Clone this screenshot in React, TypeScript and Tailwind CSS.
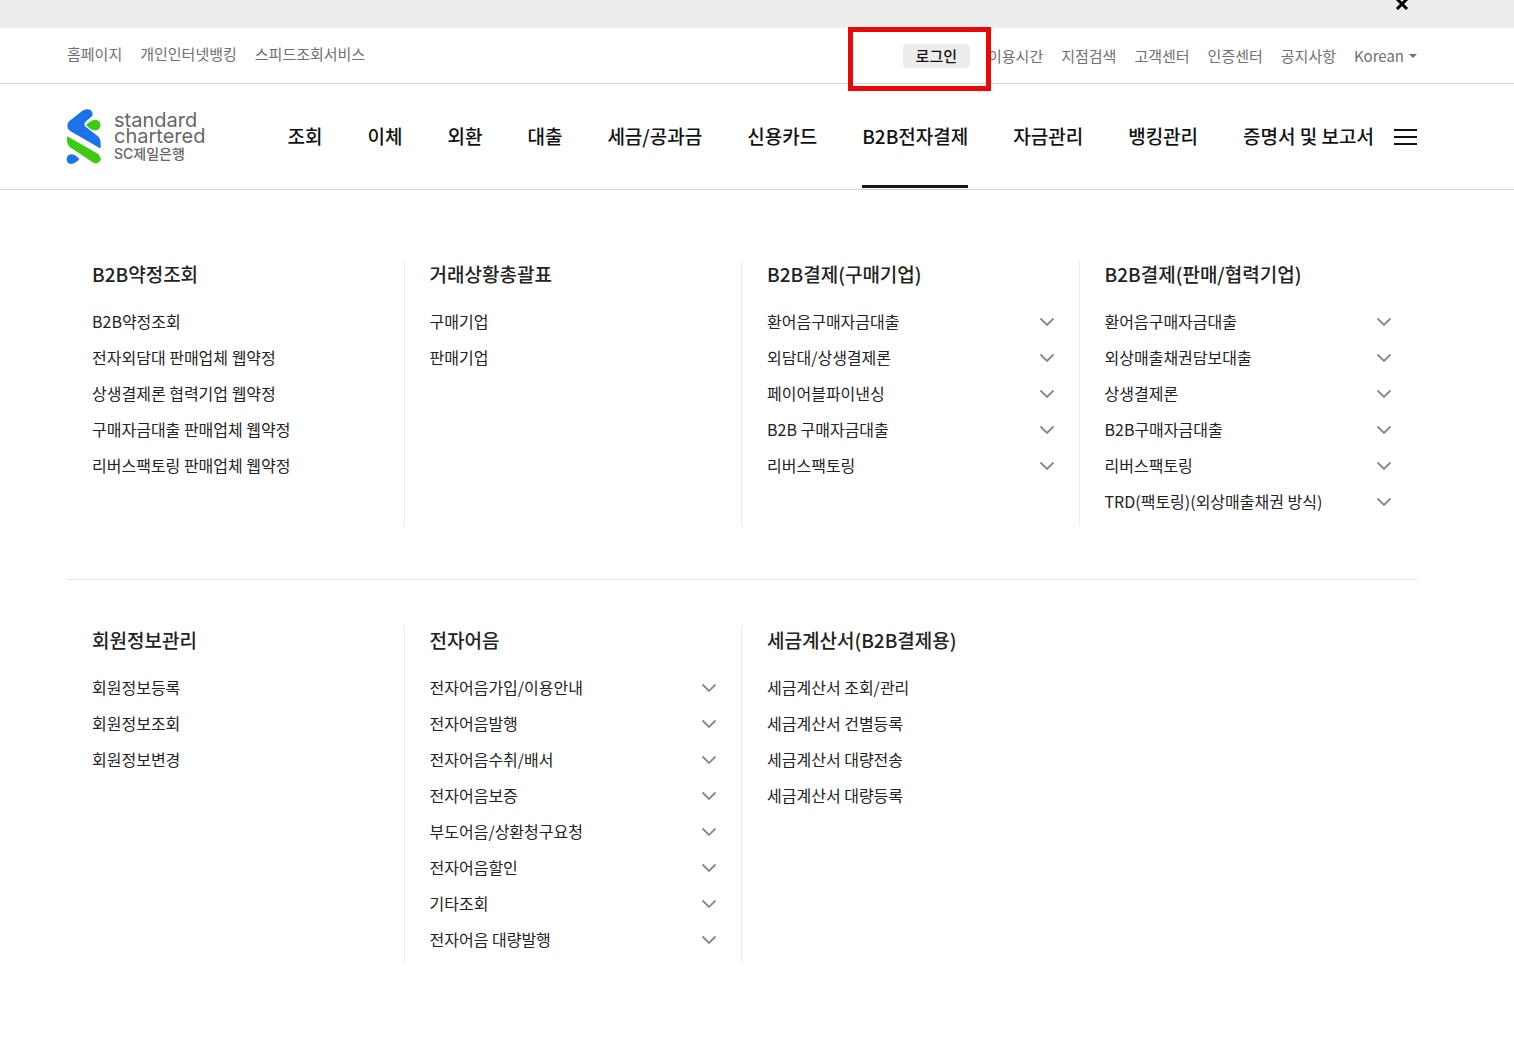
type MenuItem = { label: string; expandable?: boolean };
type MenuGroup = { title: string; items: MenuItem[] };

const leftLinks = ["홈페이지", "개인인터넷뱅킹", "스피드조회서비스"];
const rightLinks = ["이용시간", "지점검색", "고객센터", "인증센터", "공지사항"];

const navItems = [
  "조회",
  "이체",
  "외환",
  "대출",
  "세금/공과금",
  "신용카드",
  "B2B전자결제",
  "자금관리",
  "뱅킹관리",
  "증명서 및 보고서",
];
const activeNav = "B2B전자결제";

function plain(...labels: string[]): MenuItem[] {
  return labels.map((label) => ({ label }));
}

function expandable(...labels: string[]): MenuItem[] {
  return labels.map((label) => ({ label, expandable: true }));
}

const menuRows: MenuGroup[][] = [
  [
    {
      title: "B2B약정조회",
      items: plain(
        "B2B약정조회",
        "전자외담대 판매업체 웹약정",
        "상생결제론 협력기업 웹약정",
        "구매자금대출 판매업체 웹약정",
        "리버스팩토링 판매업체 웹약정",
      ),
    },
    { title: "거래상황총괄표", items: plain("구매기업", "판매기업") },
    {
      title: "B2B결제(구매기업)",
      items: expandable(
        "환어음구매자금대출",
        "외담대/상생결제론",
        "페이어블파이낸싱",
        "B2B 구매자금대출",
        "리버스팩토링",
      ),
    },
    {
      title: "B2B결제(판매/협력기업)",
      items: expandable(
        "환어음구매자금대출",
        "외상매출채권담보대출",
        "상생결제론",
        "B2B구매자금대출",
        "리버스팩토링",
        "TRD(팩토링)(외상매출채권 방식)",
      ),
    },
  ],
  [
    { title: "회원정보관리", items: plain("회원정보등록", "회원정보조회", "회원정보변경") },
    {
      title: "전자어음",
      items: expandable(
        "전자어음가입/이용안내",
        "전자어음발행",
        "전자어음수취/배서",
        "전자어음보증",
        "부도어음/상환청구요청",
        "전자어음할인",
        "기타조회",
        "전자어음 대량발행",
      ),
    },
    {
      title: "세금계산서(B2B결제용)",
      items: plain("세금계산서 조회/관리", "세금계산서 건별등록", "세금계산서 대량전송", "세금계산서 대량등록"),
    },
  ],
];

function Logo() {
  return (
    <a href="#" className="flex items-center gap-3 text-[#666]">
      <svg viewBox="0 0 108 170" className="h-14 w-9" aria-hidden="true">
        <path
          d="M48 6 Q61 -3 75 4 Q86 17 74 26 L60 37 Q50 46 60 55 L98 84 Q107 94 104 120 L12 67 Q-3 55 8 38 Z"
          fill="#1a73ea"
        />
        <path d="M61 49 Q73 34 88 33 Q104 35 104 49 Q102 64 88 65 Q74 64 61 49 Z" fill="#3ccb12" />
        <path
          d="M3 83 L96 136 Q109 147 103 158 Q94 170 80 162 L12 116 Q-1 105 3 83 Z"
          fill="#3ccb12"
        />
        <path d="M40 152 Q28 166 15 167 Q1 165 1 152 Q2 138 16 137 Q30 139 40 152 Z" fill="#1a73ea" />
      </svg>
      <span className="flex flex-col font-['Inter','Noto_Sans_CJK_KR',sans-serif]">
        <span className="text-xl leading-4">standard</span>
        <span className="text-xl leading-4">chartered</span>
        <span className="mt-0.5 text-sm leading-4 font-medium">SC제일은행</span>
      </span>
    </a>
  );
}

function UtilityBar() {
  return (
    <div className="border-b border-[#d8d8d8]">
      <div className="flex h-[55px] items-center justify-between pr-[97px] pl-[67px] text-[15px] text-[#6f6f6f]">
        <ul className="flex gap-[18px] pb-0.5">
          {leftLinks.map((label) => (
            <li key={label}>
              <a href="#">{label}</a>
            </li>
          ))}
        </ul>
        <ul className="flex items-center gap-[18px] pt-px">
          <li className="relative">
            <button type="button" className="block h-6 rounded bg-[#ededed] px-[13px] leading-6 font-medium text-[#111]">
              로그인
            </button>
            {/* highlight frame around the login button */}
            <span className="pointer-events-none absolute -top-[17px] -right-[21px] -bottom-[23px] -left-[55px] border-5 border-[#e80808]" />
          </li>
          {rightLinks.map((label) => (
            <li key={label}>
              <a href="#">{label}</a>
            </li>
          ))}
          <li>
            <button type="button" className="flex items-center gap-[5px]">
              Korean
              <svg viewBox="0 0 8 4" className="h-1 w-2" fill="currentColor" aria-hidden="true">
                <path d="M0 0h8L4 4z" />
              </svg>
            </button>
          </li>
        </ul>
      </div>
    </div>
  );
}

function Header() {
  return (
    <header className="border-b border-[#d0d0d0]">
      <div className="flex h-[105px] items-stretch justify-between pr-[97px] pl-[66px]">
        <Logo />
        <div className="flex items-stretch gap-5">
          <nav className="flex items-stretch gap-[45px] text-[19px] font-medium text-[#111]">
            {navItems.map((label) => (
              <a
                key={label}
                href="#"
                className={`mb-px flex items-center border-b-3 pt-1 whitespace-nowrap ${
                  label === activeNav ? "border-[#1a1a1a]" : "border-transparent"
                }`}
              >
                {label}
              </a>
            ))}
          </nav>
          <button type="button" aria-label="전체메뉴" className="flex flex-col justify-center gap-[5px]">
            <span className="h-0.5 w-[23px] bg-[#111]" />
            <span className="h-0.5 w-[23px] bg-[#111]" />
            <span className="h-0.5 w-[23px] bg-[#111]" />
          </button>
        </div>
      </div>
    </header>
  );
}

function MenuColumn({ group, last }: { group: MenuGroup; last: boolean }) {
  return (
    <section className={`border-r pr-6 pb-1.5 pl-[25px] ${last ? "border-transparent" : "border-[#ececec]"}`}>
      <h2 className="text-[19px] leading-[26px] font-medium text-[#222]">{group.title}</h2>
      <ul className="mt-4">
        {group.items.map((item) => (
          <li key={item.label} className="flex h-9 items-center justify-between text-base text-[#222]">
            <a href="#">{item.label}</a>
            {item.expandable && (
              <button type="button" aria-label={`${item.label} 펼치기`} className="pt-0.5">
                <svg
                  viewBox="0 0 16 10"
                  className="h-2.5 w-4"
                  fill="none"
                  stroke="#888"
                  strokeWidth="1.8"
                  aria-hidden="true"
                >
                  <path d="M1.5 1.5L8 8l6.5-6.5" />
                </svg>
              </button>
            )}
          </li>
        ))}
      </ul>
    </section>
  );
}

export default function App() {
  return (
    <div className="min-h-screen overflow-hidden bg-white font-['Noto_Sans_CJK_KR',sans-serif]">
      <div className="flex h-7 justify-end bg-[#ededed] pr-[105px]">
        <button type="button" aria-label="닫기" className="-mt-1 h-4 w-3.5 text-black">
          <svg viewBox="0 0 14 16" fill="none" stroke="currentColor" strokeWidth="3" aria-hidden="true">
            <path d="M2 3l10 10M12 3L2 13" />
          </svg>
        </button>
      </div>
      <UtilityBar />
      <Header />
      <main className="pr-[97px] pl-[67px]">
        {menuRows.map((row, index) => (
          <div
            key={row[0].title}
            className={`grid grid-cols-4 ${index === 0 ? "pt-[71px] pb-[54px]" : "border-t border-[#e8e8e8] pt-[47px]"}`}
          >
            {row.map((group, column) => (
              <MenuColumn key={group.title} group={group} last={column === row.length - 1} />
            ))}
          </div>
        ))}
      </main>
    </div>
  );
}
